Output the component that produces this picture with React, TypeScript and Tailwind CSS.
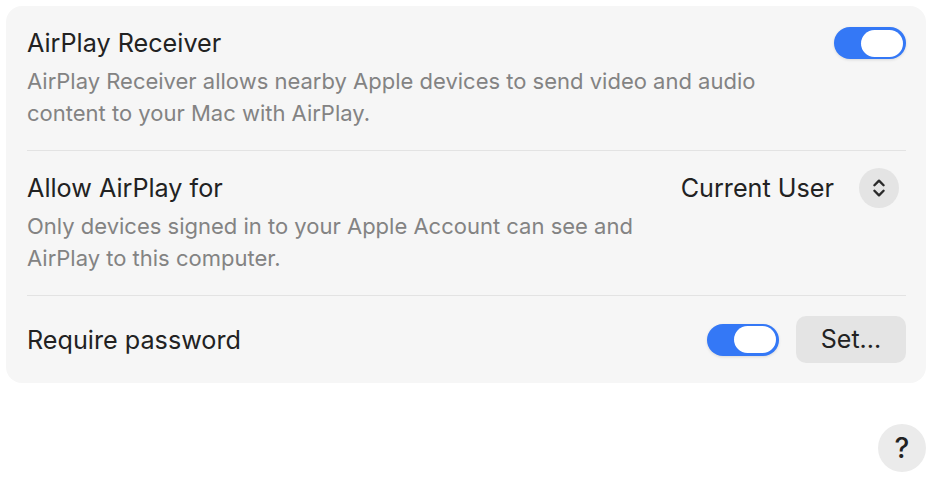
import { ChevronsUpDown } from "lucide-react";

function Toggle() {
  return (
    <div className="w-[72px] h-[32px] rounded-full bg-[#3478f6] flex items-center justify-end pr-[3px] shadow-[0_1px_3px_rgba(0,0,0,0.12)]">
      <div className="w-[42px] h-[27px] rounded-full bg-white" />
    </div>
  );
}

export default function App() {
  return (
    <div
      className="w-[940px] h-[504px] bg-white p-[6px] pr-[14px] flex flex-col"
      style={{ fontFamily: "Inter, 'Noto Sans', sans-serif" }}>
      {/* Card */}
      <div className="bg-[#f6f6f6] rounded-[16px] px-[21px] pr-[20px]">
        {/* AirPlay Receiver */}
        <div className="pt-[21px] pb-[21px] border-b border-[#e3e3e3] flex justify-between">
          <div>
            <div className="text-[25.2px] leading-[32px] text-[#222]">AirPlay Receiver</div>
            <p className="mt-[6px] text-[22px] leading-[32px] text-[#838383]">
              AirPlay Receiver allows nearby Apple devices to send video and audio
              <br />
              content to your Mac with AirPlay.
            </p>
          </div>
          <Toggle />
        </div>

        {/* Allow AirPlay for */}
        <div className="pt-[21px] pb-[21px] border-b border-[#e3e3e3] flex justify-between">
          <div>
            <div className="text-[25.2px] leading-[32px] text-[#222]">Allow AirPlay for</div>
            <p className="mt-[6px] text-[22px] leading-[32px] text-[#838383]">
              Only devices signed in to your Apple Account can see and
              <br />
              AirPlay to this computer.
            </p>
          </div>
          <div className="flex items-start gap-[25px] pr-[7px] -mt-[4px]">
            <span className="text-[25.2px] leading-[40px] text-[#222]">Current User</span>
            <button className="w-[40px] h-[40px] rounded-full bg-[#e4e4e4] flex items-center justify-center text-[#2a2a2a]">
              <ChevronsUpDown size={22} strokeWidth={2.6} />
            </button>
          </div>
        </div>

        {/* Require password */}
        <div className="py-[20px] flex justify-between items-center">
          <div className="text-[25.2px] leading-[32px] text-[#222]">Require password</div>
          <div className="flex items-center gap-[17px]">
            <Toggle />
            <button className="w-[110px] h-[47px] rounded-[10px] bg-[#e4e4e4] text-[25px] text-[#222]">
              Set...
            </button>
          </div>
        </div>
      </div>

      {/* Help */}
      <div className="flex justify-end mt-[41px]">
        <button className="w-[48px] h-[48px] rounded-full bg-[#ebebeb] text-[28px] font-medium text-[#222] flex items-center justify-center">
          ?
        </button>
      </div>
    </div>
  );
}
